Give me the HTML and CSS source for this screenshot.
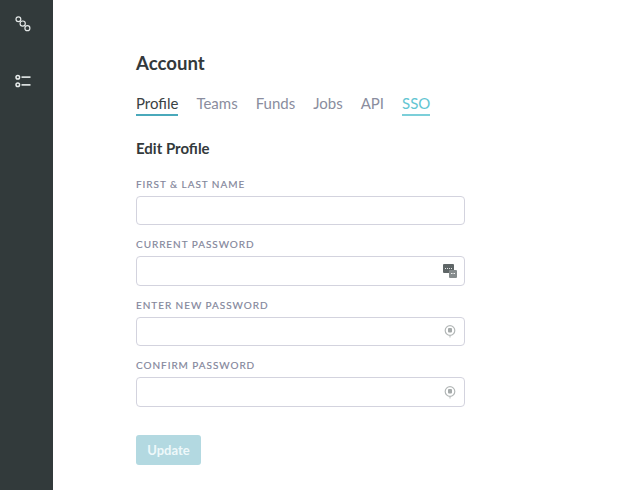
FILE: index.html
```html
<!DOCTYPE html>
<html lang="en">
<head>
<meta charset="utf-8">
<title>Account</title>
<link rel="stylesheet" href="styles.css">
</head>
<body>
<div class="app">
  <nav class="rail">
    <svg class="rail-icon" width="16" height="16" viewBox="0 0 16 16" fill="none" stroke="#e4e8e8" stroke-width="1.2"><circle cx="3.4" cy="3.2" r="2.4"/><circle cx="7.7" cy="7.6" r="2.6"/><circle cx="12.4" cy="12.2" r="2.5"/></svg>
    <svg class="rail-icon" width="16" height="14" viewBox="0 0 16 14" fill="none"><circle cx="2.8" cy="3.2" r="1.8" stroke="#e8ecec" stroke-width="1.5"/><circle cx="2.8" cy="10.8" r="1.8" stroke="#e8ecec" stroke-width="1.5"/><path d="M6.5 3.2H15.5M6.5 10.8H15.5" stroke="#d8dddd" stroke-width="1.7"/></svg>
  </nav>
  <main class="content">
    <h1 class="title">Account</h1>
    <div class="tabs">
      <a class="tab active">Profile</a>
      <a class="tab">Teams</a>
      <a class="tab">Funds</a>
      <a class="tab">Jobs</a>
      <a class="tab">API</a>
      <a class="tab sso">SSO</a>
    </div>
    <h2 class="subtitle">Edit Profile</h2>
    <form class="form">
      <div class="field">
        <label class="label">FIRST &amp; LAST NAME</label>
        <div class="input"></div>
      </div>
      <div class="field">
        <label class="label">CURRENT PASSWORD</label>
        <div class="input">
          <svg class="key-card" width="14" height="14" viewBox="0 0 14 14"><rect x="0" y="0" width="11" height="9" rx="1" fill="#5f6667"/><rect x="6" y="6" width="8" height="8" rx="1" fill="#858b8c"/><path d="M2 4.5H9" stroke="#e4e6e6" stroke-dasharray="1 1"/><path d="M8 9.5H12.5" stroke="#f0f0f0" stroke-dasharray="1.5 1"/></svg>
        </div>
      </div>
      <div class="field">
        <label class="label">ENTER NEW PASSWORD</label>
        <div class="input">
          <svg class="lock" width="12" height="14" viewBox="0 0 12 14" fill="none"><circle cx="6" cy="6.5" r="4.8" stroke="#b4b8b8" stroke-width="1.2"/><rect x="4" y="4" width="4" height="4.5" rx="1" fill="#a5aaaa"/><path d="M6 11.5V13.5" stroke="#b4b8b8"/></svg>
        </div>
      </div>
      <div class="field">
        <label class="label">CONFIRM PASSWORD</label>
        <div class="input">
          <svg class="lock" width="12" height="14" viewBox="0 0 12 14" fill="none"><circle cx="6" cy="6.5" r="4.8" stroke="#b4b8b8" stroke-width="1.2"/><rect x="4" y="4" width="4" height="4.5" rx="1" fill="#a5aaaa"/><path d="M6 11.5V13.5" stroke="#b4b8b8"/></svg>
        </div>
      </div>
      <button class="submit" type="button">Update</button>
    </form>
  </main>
</div>
</body>
</html>
```
FILE: styles.css
```css
* { box-sizing: border-box; }
html, body { margin: 0; height: 100%; overflow: hidden; background: #fff; }
body { font-family: Lato, "Liberation Sans", sans-serif; }
.app { display: flex; height: 490px; }
.rail {
  width: 53px;
  flex: none;
  background: #323a3b;
  display: flex;
  flex-direction: column;
  align-items: flex-start;
  padding: 16px 0 0 15px;
  gap: 42px;
}
.rail-icon { display: block; }
.content { padding: 52px 0 0 83px; width: 412px; }
.title { margin: 0; font-size: 18.6px; line-height: 23px; font-weight: 700; color: #33393b; }
.tabs { display: flex; gap: 18px; margin-top: 18px; }
.tab {
  font-size: 15px;
  line-height: 20px;
  height: 23px;
  color: #8a8d9e;
  border-bottom: 2px solid transparent;
}
.tab.active { color: #3a4143; border-bottom-color: #4aa9bb; }
.tab.sso { color: #62c5d2; border-bottom-color: #7ccfd9; }
.subtitle { margin: 22px 0 0; font-size: 15px; line-height: 20px; font-weight: 700; color: #33393b; }
.form { display: flex; flex-direction: column; margin-top: 19px; }
.field { display: flex; flex-direction: column; height: 60.4px; }
.label { font-size: 10px; line-height: 14px; letter-spacing: 0.95px; color: #82859a; -webkit-text-stroke: 0.15px #82859a; }
.input {
  margin-top: 5px;
  height: 29.4px;
  border: 1px solid #d3d3de;
  border-radius: 4px;
  display: flex;
  align-items: center;
  justify-content: flex-end;
  padding-right: 7px;
  background: #fff;
}
.key-card { display: block; }
.lock { display: block; margin-right: 1px; }
.submit {
  margin-top: 16px;
  width: 65px;
  height: 30px;
  border: 0;
  border-radius: 3px;
  background: #b3d9e1;
  color: #eef8fa;
  font: 700 13px Lato, "Liberation Sans", sans-serif;
  padding: 0;
}
```
